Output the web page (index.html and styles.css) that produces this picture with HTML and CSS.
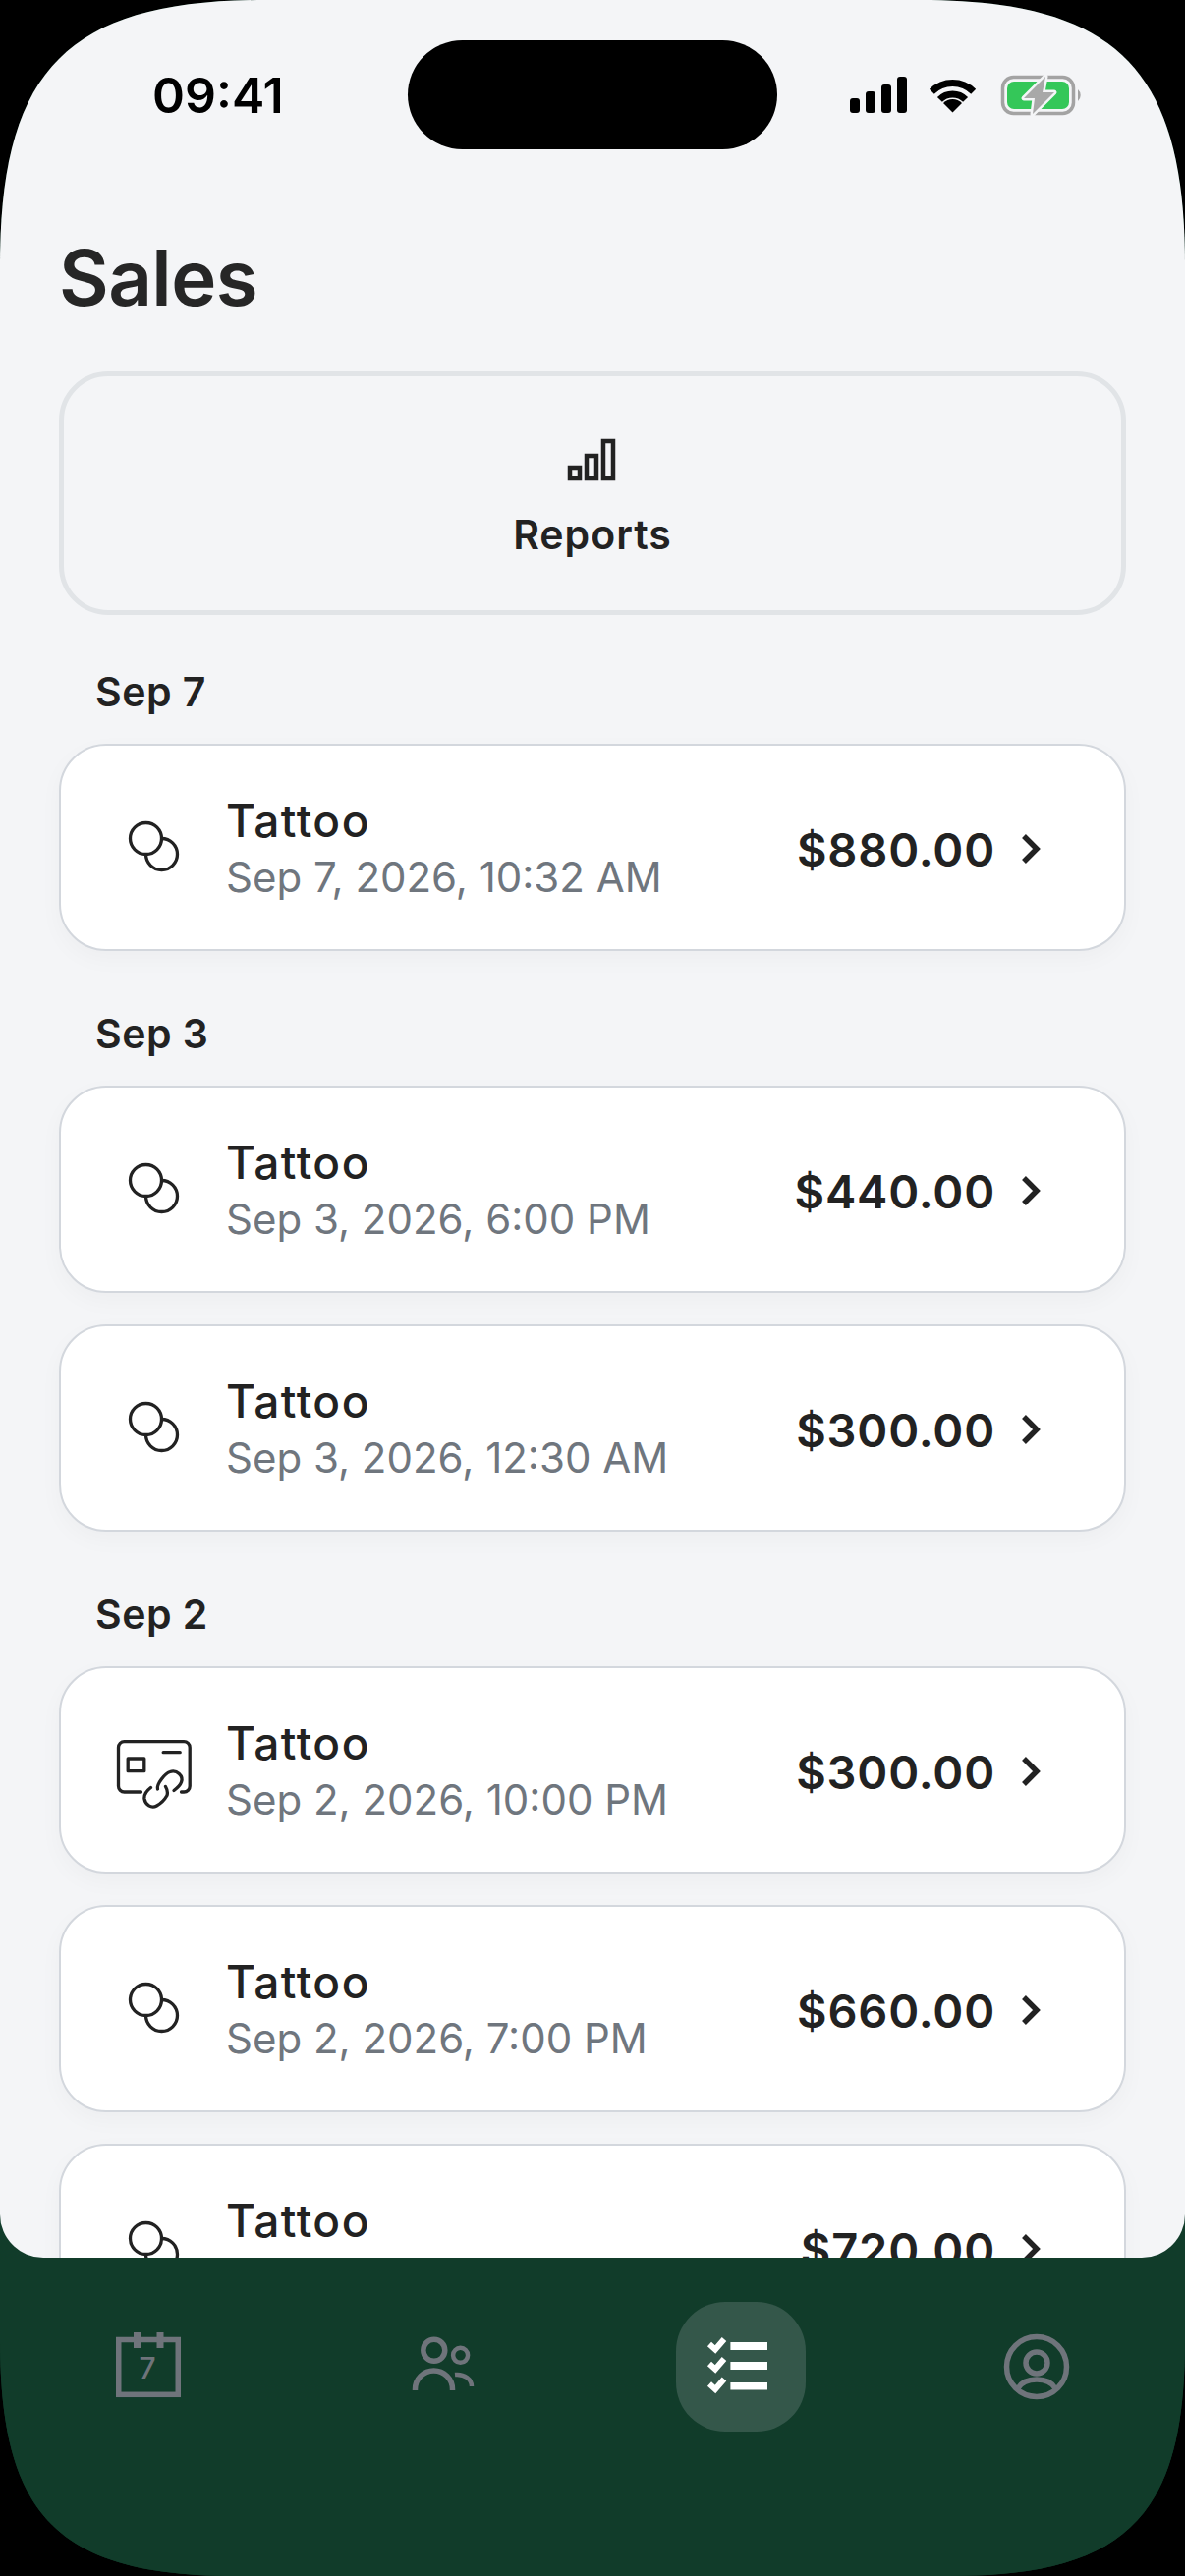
FILE: index.html
```html
<!DOCTYPE html>
<html>
<head>
	<meta charset="utf-8">
	<meta name="viewport" content="width=device-width, initial-scale=1">
	<title>Sales</title>
	<link rel="stylesheet" href="styles.css">
</head>
<body>
	<svg class="defs" width="0" height="0">
		<symbol id="coins" viewBox="0 0 78 78">
			<circle cx="46.5" cy="45.5" r="16" class="line"/>
			<circle cx="30.5" cy="29.5" r="16" class="line_white"/>
		</symbol>
		<symbol id="chevron" viewBox="0 0 24 34">
			<path d="M5 4 L18 17 L5 30" class="line_bold"/>
		</symbol>
	</svg>
	<div class="screen">
		<div class="main">
			<div class="status">
				<span class="clock">09:41</span>
				<div class="island"></div>
				<div class="status_icons">
					<svg width="58" height="37" viewBox="0 0 58 37">
						<rect x="0" y="22" width="10" height="15" rx="3"/>
						<rect x="16" y="15" width="10" height="22" rx="3"/>
						<rect x="32" y="8" width="10" height="29" rx="3"/>
						<rect x="48" y="0" width="10" height="37" rx="3"/>
					</svg>
					<svg width="51" height="37" viewBox="0 0 51 37">
						<path d="M4.3 15.3 A30 30 0 0 1 46.7 15.3" class="wifi"/>
						<path d="M12.4 23.4 A18.5 18.5 0 0 1 38.6 23.4" class="wifi"/>
						<path d="M25.5 36.5 L16 27 A13.5 13.5 0 0 1 35 27 Z"/>
					</svg>
					<svg width="86" height="44" viewBox="0 0 86 44">
						<rect x="3.5" y="3.5" width="72" height="37" rx="11" class="batt_case"/>
						<rect x="8" y="8" width="63" height="28" rx="7" class="batt_fill"/>
						<path d="M80 16 a8 8 0 0 1 0 12 Z" class="batt_nub"/>
						<path d="M47 3 L25 25 H36 L34 41 L56 19 H44 Z" class="batt_bolt"/>
					</svg>
				</div>
			</div>

			<div class="content">
				<h1>Sales</h1>

				<div class="reports">
					<svg width="52" height="45" viewBox="0 0 52 45">
						<path d="M3 30 h10 v11 h-10 Z M20 18 h10 v23 h-10 Z M37 3 h10 v38 h-10 Z" class="line_thick"/>
					</svg>
					<span>Reports</span>
				</div>

				<div class="day">
					<div class="day_title">Sep 7</div>
					<div class="day_list">
						<div class="sale">
							<svg class="sale_icon" width="78" height="78"><use href="#coins"/></svg>
							<div class="sale_text">
								<div class="sale_name">Tattoo</div>
								<div class="sale_date">Sep 7, 2026, 10:32 AM</div>
							</div>
							<div class="sale_amount">$880.00</div>
							<svg class="sale_arrow" width="24" height="34"><use href="#chevron"/></svg>
						</div>
					</div>
				</div>

				<div class="day">
					<div class="day_title">Sep 3</div>
					<div class="day_list">
						<div class="sale">
							<svg class="sale_icon" width="78" height="78"><use href="#coins"/></svg>
							<div class="sale_text">
								<div class="sale_name">Tattoo</div>
								<div class="sale_date">Sep 3, 2026, 6:00 PM</div>
							</div>
							<div class="sale_amount">$440.00</div>
							<svg class="sale_arrow" width="24" height="34"><use href="#chevron"/></svg>
						</div>
						<div class="sale">
							<svg class="sale_icon" width="78" height="78"><use href="#coins"/></svg>
							<div class="sale_text">
								<div class="sale_name">Tattoo</div>
								<div class="sale_date">Sep 3, 2026, 12:30 AM</div>
							</div>
							<div class="sale_amount">$300.00</div>
							<svg class="sale_arrow" width="24" height="34"><use href="#chevron"/></svg>
						</div>
					</div>
				</div>

				<div class="day">
					<div class="day_title">Sep 2</div>
					<div class="day_list">
						<div class="sale">
							<svg class="sale_icon" width="78" height="78" viewBox="0 0 78 78">
								<path d="M25.5 61 H8.5 a6 6 0 0 1 -6 -6 V15.7 a6 6 0 0 1 6 -6 H69.2 a6 6 0 0 1 6 6 V55 a6 6 0 0 1 -6 6 H66.5" class="line"/>
								<rect x="12.2" y="27" width="16.6" height="12.7" class="line"/>
								<path d="M48.2 20.7 H65.2" class="line"/>
								<path d="M42.5 58 C41 53 50 42 55 40.5 C62 38 69 45 66.5 51 C65.5 54 63 56.5 59 59.5" class="line"/>
								<path d="M35.5 56.5 C31 60 28.5 64 29 68 C30 74 36 78 41.5 75 C46 72.5 50 68 52 64.5 C53 61 52 58 50.5 55.5" class="line"/>
							</svg>
							<div class="sale_text">
								<div class="sale_name">Tattoo</div>
								<div class="sale_date">Sep 2, 2026, 10:00 PM</div>
							</div>
							<div class="sale_amount">$300.00</div>
							<svg class="sale_arrow" width="24" height="34"><use href="#chevron"/></svg>
						</div>
						<div class="sale">
							<svg class="sale_icon" width="78" height="78"><use href="#coins"/></svg>
							<div class="sale_text">
								<div class="sale_name">Tattoo</div>
								<div class="sale_date">Sep 2, 2026, 7:00 PM</div>
							</div>
							<div class="sale_amount">$660.00</div>
							<svg class="sale_arrow" width="24" height="34"><use href="#chevron"/></svg>
						</div>
						<div class="sale">
							<svg class="sale_icon" width="78" height="78"><use href="#coins"/></svg>
							<div class="sale_text">
								<div class="sale_name">Tattoo</div>
								<div class="sale_date">&nbsp;</div>
							</div>
							<div class="sale_amount">$720.00</div>
							<svg class="sale_arrow" width="24" height="34"><use href="#chevron"/></svg>
						</div>
					</div>
				</div>
			</div>
		</div>

		<div class="nav">
			<div class="nav_item">
				<svg width="70" height="70" viewBox="0 0 70 70" class="nav_icon">
					<rect x="4.75" y="7.5" width="60.5" height="55.8" class="nav_line"/>
					<path d="M23.5 0 V16 M47 0 V16" class="nav_line tab"/>
					<text x="34" y="47" class="cal_day">7</text>
				</svg>
			</div>
			<div class="nav_item">
				<svg width="70" height="68" viewBox="0 0 70 68" class="nav_icon">
					<circle cx="24.8" cy="17.3" r="11" class="nav_line"/>
					<circle cx="51.6" cy="22.3" r="7.5" class="nav_line thin"/>
					<path d="M5.5 58 v-1 a19 19 0 0 1 38 0 v1" class="nav_line"/>
					<path d="M46 42 c10 -1 17 5 17 12" class="nav_line thin"/>
				</svg>
			</div>
			<div class="nav_item active">
				<svg width="72" height="66" viewBox="0 0 72 66" class="nav_icon">
					<rect x="25.4" y="8" width="37.6" height="8"/>
					<rect x="25.4" y="28" width="37.6" height="8"/>
					<rect x="25.4" y="49" width="37.6" height="7.5"/>
					<path d="M4 10 L10 15.5 L19 5" class="check"/>
					<path d="M4 30 L10 35.5 L19 25" class="check"/>
					<path d="M4 50.5 L10 56 L19 45.5" class="check"/>
				</svg>
			</div>
			<div class="nav_item">
				<svg width="70" height="70" viewBox="0 0 70 70" class="nav_icon">
					<circle cx="35" cy="35" r="30.5" class="nav_line"/>
					<circle cx="35" cy="31" r="11" class="nav_line"/>
					<path d="M16 57 c4 -7 11 -9 19 -9 s15 2 19 9" class="nav_line"/>
				</svg>
			</div>
		</div>
	</div>
</body>
</html>
```

FILE: styles.css
```css
* {
	box-sizing: border-box;
}
html, body {
	margin: 0;
	background: black;
}
body {
	width: 1206px;
	height: 2622px;
	overflow: hidden;
	font-family: "Inter", "Noto Sans", sans-serif;
	color: #222222;
}
.defs {
	display: block;
	height: 0;
}
.screen {
	width: 1206px;
	height: 2622px;
	overflow: hidden;
	background: #113c2a;
	clip-path: path("M0 270 C0 70 70 0 270 0 H936 C1136 0 1206 70 1206 270 V2382 C1206 2562 1146 2622 966 2622 H240 C60 2622 0 2562 0 2382 Z");
}
.main {
	height: 2298px;
	overflow: hidden;
	background: #f4f5f7;
	border-radius: 0 0 44px 44px;
}

/* status bar */
.status {
	display: flex;
	align-items: center;
	padding: 41px 0 0 155px;
}
.clock {
	width: 260px;
	font-size: 50px;
	font-weight: 600;
	line-height: 60px;
	color: black;
}
.island {
	width: 376px;
	height: 111px;
	border-radius: 56px;
	background: black;
}
.status_icons {
	display: flex;
	align-items: center;
	margin-left: 74px;
	gap: 21px;
}
.status_icons svg:last-child {
	margin-left: 1px;
}
.wifi {
	fill: none;
	stroke: black;
	stroke-width: 7;
}
.batt_case {
	fill: none;
	stroke: #a3a3a3;
	stroke-width: 3.5;
}
.batt_fill {
	fill: #34c759;
}
.batt_nub {
	fill: #a3a3a3;
}
.batt_bolt {
	fill: #a8a8a8;
	stroke: #f4f5f7;
	stroke-width: 5;
	paint-order: stroke;
	stroke-linejoin: round;
}

.content {
	padding: 0 60px;
}
h1 {
	margin: 85px 0 0 0;
	font-size: 78px;
	line-height: 92px;
	font-weight: 600;
	letter-spacing: -0.6px;
	color: #262626;
}
.reports {
	display: flex;
	flex-direction: column;
	align-items: center;
	height: 248px;
	margin: 49px 0 53px 0;
	padding-top: 63px;
	border: 5px solid #e1e4e7;
	border-radius: 50px;
}
.reports span {
	margin-top: 25px;
	font-size: 41px;
	line-height: 56px;
	font-weight: 600;
	letter-spacing: 1px;
}
.line_thick {
	fill: none;
	stroke: #222222;
	stroke-width: 4.5;
}

.day + .day {
	margin-top: 59px;
}
.day_title {
	height: 50px;
	margin: 0 0 28px 37px;
	font-size: 41px;
	line-height: 50px;
	font-weight: 600;
	letter-spacing: 0.5px;
}
.day_list {
	display: flex;
	flex-direction: column;
	gap: 32px;
}
.sale {
	display: flex;
	align-items: center;
	height: 211px;
	padding: 3px 83px 0 56px;
	background: white;
	border: 2px solid #d3d7dd;
	border-radius: 48px;
	box-shadow: 0 8px 24px rgba(0, 0, 0, 0.03);
}
.sale_icon {
	flex: none;
	margin-top: -3px;
}
.sale_text {
	margin-left: 34px;
}
.sale_name {
	font-size: 46px;
	line-height: 58px;
	font-weight: 500;
	letter-spacing: 1.5px;
}
.sale_date {
	font-size: 42px;
	line-height: 58px;
	color: #6f767e;
}
.sale_amount {
	margin-left: auto;
	font-size: 47px;
	font-weight: 600;
	letter-spacing: 0.85px;
}
.sale_arrow {
	flex: none;
	margin-left: 24px;
}
.line, .line_white, .line_bold {
	fill: none;
	stroke: #222222;
	stroke-width: 3.3;
	stroke-linecap: round;
	stroke-linejoin: round;
}
.line_white {
	fill: white;
}
.line_bold {
	stroke-width: 5.5;
	stroke-linecap: butt;
	stroke-linejoin: miter;
}

/* bottom tabs */
.nav {
	display: grid;
	grid-template-columns: repeat(4, 1fr);
	height: 324px;
	padding-top: 45px;
	background: #113c2a;
	align-items: start;
}
.nav_item {
	display: flex;
	align-items: center;
	justify-content: center;
	width: 132px;
	height: 132px;
	justify-self: center;
	border-radius: 50px;
}
.nav_item.active {
	background: #34574a;
}
.nav_icon {
	fill: white;
}
.nav_line {
	fill: none;
	stroke: #6f747b;
	stroke-width: 5.5;
}
.nav_line.thin {
	stroke-width: 4.5;
}
.nav_line.tab {
	stroke-width: 7;
}
.cal_day {
	fill: #6f747b;
	stroke: none;
	font-size: 30px;
	font-weight: 500;
	text-anchor: middle;
}
.check {
	fill: none;
	stroke: white;
	stroke-width: 6;
}
```
